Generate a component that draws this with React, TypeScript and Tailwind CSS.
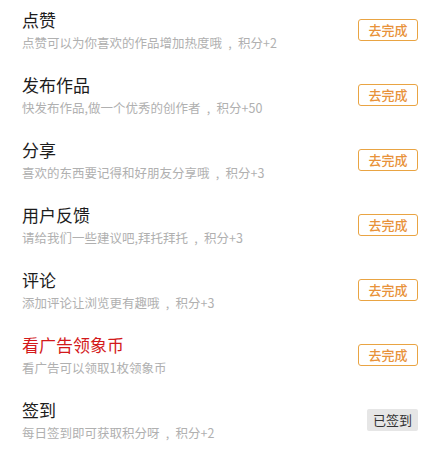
const tasks = [
  { title: '点赞', desc: '点赞可以为你喜欢的作品增加热度哦', pts: '2' },
  { title: '发布作品', desc: '快发布作品,做一个优秀的创作者', pts: '50' },
  { title: '分享', desc: '喜欢的东西要记得和好朋友分享哦', pts: '3' },
  { title: '用户反馈', desc: '请给我们一些建议吧,拜托拜托', pts: '3' },
  { title: '评论', desc: '添加评论让浏览更有趣哦', pts: '3' },
  { title: '看广告领象币', desc: '看广告可以领取1枚领象币', red: true },
  { title: '签到', desc: '每日签到即可获取积分呀', pts: '2', done: true },
]

export default function App() {
  return (
    <div
      className="w-[441px] h-[450px] overflow-hidden bg-white"
      style={{ fontFamily: '"Noto Sans CJK SC", "Noto Sans", sans-serif' }}
    >
      {tasks.map((t) => (
        <div key={t.title} className="flex h-[65px] items-start justify-between pl-[22px] pr-[23px] pt-[8px]">
          <div className="flex flex-col gap-[2px]">
            <div className={`text-[17px] leading-[24px] ${t.red ? 'text-[#d3191b]' : 'text-[#1c1c1c]'}`}>
              {t.title}
            </div>
            <div className="text-[12.5px] leading-[18px] text-[#b0b0b0]">
              {t.desc}
              {t.pts && (
                <>
                  <span className="inline-block w-[16px] text-center">,</span>
                  积分+{t.pts}
                </>
              )}
            </div>
          </div>
          <div className="flex h-[44px] items-center">
            {t.done ? (
              <div className="flex h-[22px] w-[51px] items-center justify-center rounded-[2px] bg-[#e6e6e6] text-[13px] text-[#333]">
                已签到
              </div>
            ) : (
              <div className="flex h-[22px] w-[60px] items-center justify-center rounded-[3px] border border-[#e9a443] text-[13px] font-medium text-[#e8923a]">
                去完成
              </div>
            )}
          </div>
        </div>
      ))}
    </div>
  )
}
